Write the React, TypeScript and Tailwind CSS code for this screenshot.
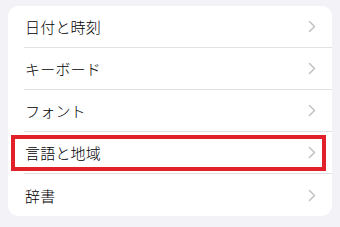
import React from "react";

const items = ["日付と時刻", "キーボード", "フォント", "言語と地域", "辞書"];

function Chevron() {
  return (
    <svg width="8" height="13" viewBox="0 0 8 13" className="shrink-0">
      <polyline points="1.5,1.5 6.5,6.5 1.5,11.5" fill="none" stroke="#c4c4c7" strokeWidth="1.6" strokeLinecap="round" strokeLinejoin="round" />
    </svg>
  );
}

export default function App() {
  return (
    <div className="w-[340px] h-[227px] bg-[#f2f2f7] pt-[6px] px-[8px] overflow-hidden" style={{ fontFamily: '"Noto Sans CJK JP", "Noto Sans", sans-serif' }}>
      <div className="bg-white rounded-[10px] w-[324px]">
        {items.map((t, i) => (
          <div key={t} className="relative h-[42px] flex items-center pl-[16px]">
            <div className={`flex-1 h-full flex items-center justify-between pr-[16px] ${i < items.length - 1 ? "border-b border-[#e2e2e4]" : ""}`}>
              <span className="text-[15px] font-light text-black leading-none pl-[1px] tracking-[0.2px]">{t}</span>
              <Chevron />
            </div>
            {i === 3 && (
              <div className="absolute left-[3px] right-[6px] top-[3px] bottom-[3px] border-[4px] border-[#e2202a]" />
            )}
          </div>
        ))}
      </div>
    </div>
  );
}
